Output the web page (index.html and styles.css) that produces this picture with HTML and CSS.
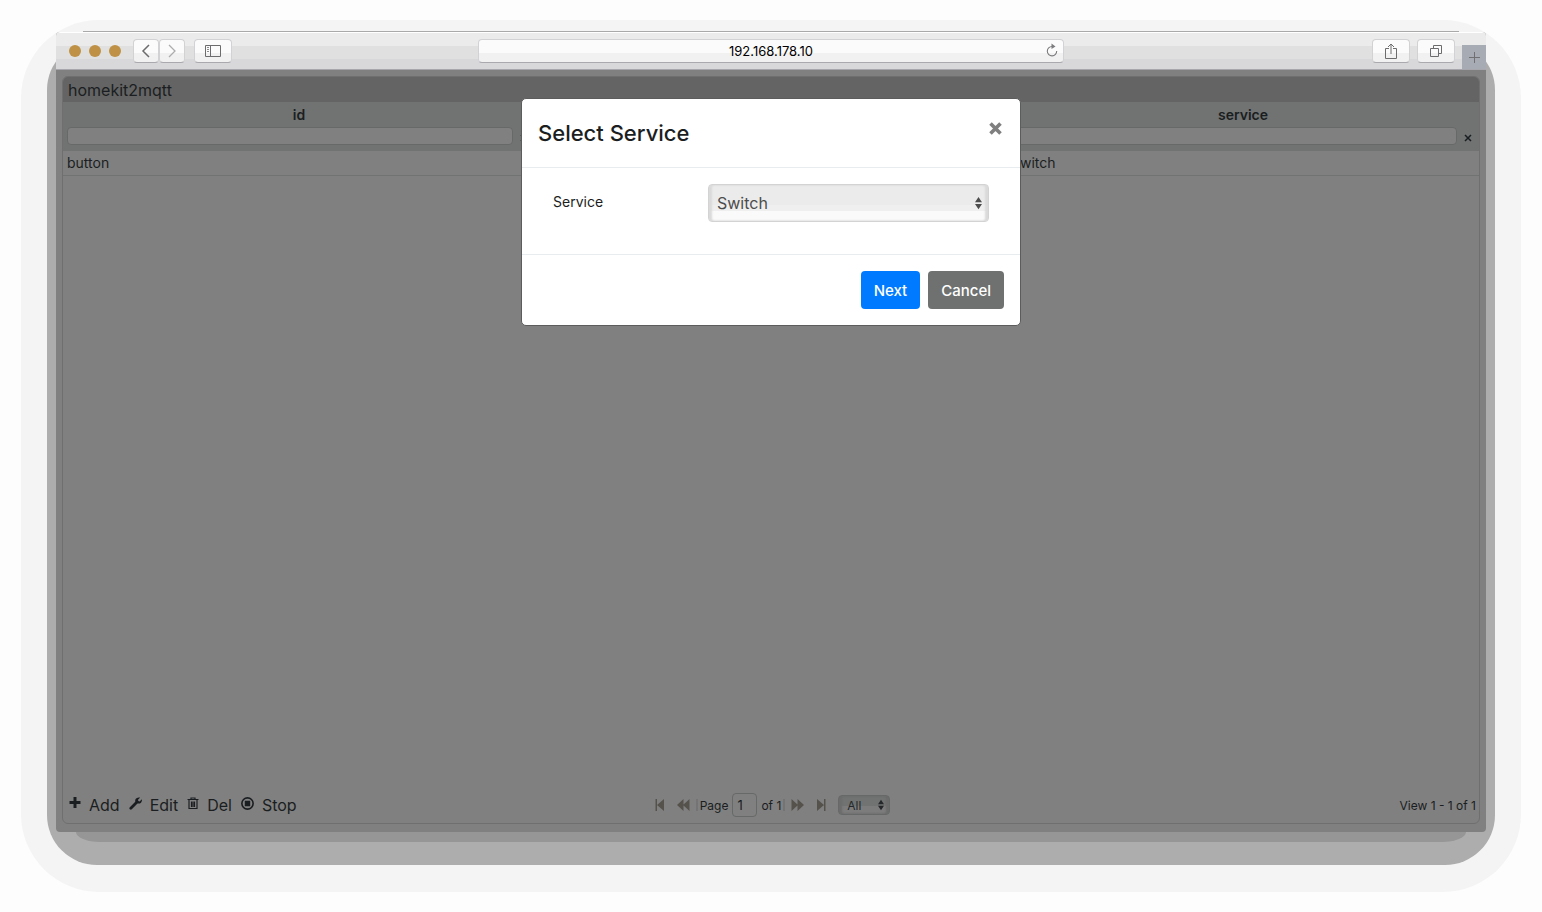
FILE: index.html
```html
<!DOCTYPE html>
<html lang="en">
<head>
    <meta charset="UTF-8">
    <meta name="viewport" content="width=device-width, initial-scale=1.0">
    <title>homekit2mqtt</title>
    <link rel="stylesheet" href="styles.css">
</head>
<body>
    <div class="glow">
        <div class="top-line"></div>
        <div class="shadow">
            <div class="window">
                <div class="toolbar">
                    <div class="toolbar-left">
                        <span class="dot"></span>
                        <span class="dot"></span>
                        <span class="dot"></span>
                        <div class="nav-buttons">
                            <button class="tool nav" aria-label="Back">
                                <svg width="10" height="14" viewBox="0 0 10 14"><path d="M8 1L2 7l6 6" fill="none" stroke="#6c6c6e" stroke-width="1.5"/></svg>
                            </button>
                            <button class="tool nav" aria-label="Forward">
                                <svg width="10" height="14" viewBox="0 0 10 14"><path d="M2 1l6 6-6 6" fill="none" stroke="#acacae" stroke-width="1.3"/></svg>
                            </button>
                        </div>
                        <button class="tool" aria-label="Sidebar">
                            <svg width="16" height="12" viewBox="0 0 16 12"><path d="M.5.5h15v11H.5zM5.5.5v11" fill="none" stroke="#6c6c6e"/><path d="M2 2.5h2M2 4.5h2M2 6.5h2" stroke="#8c8c8e"/></svg>
                        </button>
                    </div>
                    <div class="address">
                        <input type="text" class="address-input" aria-label="Address" value="192.168.178.10">
                        <button class="reload" aria-label="Reload">
                            <svg width="12" height="14" viewBox="0 0 12 14"><path d="M6 3.5A4.7 4.7 0 1 0 10.7 8" fill="none" stroke="#7c7c7e" stroke-width="1.1"/><path d="M5.5.5l4 3-4 2.5z" fill="#7c7c7e"/></svg>
                        </button>
                    </div>
                    <div class="toolbar-right">
                        <button class="tool" aria-label="Share">
                            <svg width="12" height="16" viewBox="0 0 12 16"><path d="M4 5.5H.5v10h11v-10H8M6 11V1.5M3 4l3-3 3 3" fill="none" stroke="#6c6c6e"/></svg>
                        </button>
                        <button class="tool" aria-label="Show tabs">
                            <svg width="12" height="12" viewBox="0 0 12 12"><path d="M.5 3.5h8v8h-8zM3.500 3.500v-3h8v8h-3" fill="none" stroke="#6c6c6e"/></svg>
                        </button>
                        <button class="new-tab" aria-label="New tab">
                            <svg width="11" height="11" viewBox="0 0 11 11"><path d="M5.5 0v11M0 5.5h11" stroke="#707072"/></svg>
                        </button>
                    </div>
                </div>

                <div class="page">
                    <div class="grid">
                        <div class="caption">homekit2mqtt</div>
                        <table>
                            <thead>
                                <tr class="labels">
                                    <th>id</th>
                                    <th></th>
                                    <th>service</th>
                                </tr>
                                <tr class="filters">
                                    <td><div class="filter"><input type="text" aria-label="Filter id"><button aria-label="Clear id"><svg width="8" height="8" viewBox="0 0 8 8"><path d="M1 1l6 6M7 1L1 7" stroke="#1b1e21" stroke-width="1.5"/></svg></button></div></td>
                                    <td></td>
                                    <td><div class="filter"><input type="text" aria-label="Filter service"><button aria-label="Clear service"><svg width="8" height="8" viewBox="0 0 8 8"><path d="M1 1l6 6M7 1L1 7" stroke="#1b1e21" stroke-width="1.5"/></svg></button></div></td>
                                </tr>
                            </thead>
                            <tbody>
                                <tr>
                                    <td>button</td>
                                    <td></td>
                                    <td>Switch</td>
                                </tr>
                            </tbody>
                        </table>

                        <div class="pager">
                            <div class="actions">
                                <button><svg width="12" height="12" viewBox="0 0 12 12"><path d="M6 0v11M.5 5.5h11" stroke="#1b1e21" stroke-width="3"/></svg>Add</button>
                                <button><svg width="13" height="13" viewBox="0 0 13 13"><path d="M1.8 11.2L8 5" stroke="#1b1e21" stroke-width="2.8" stroke-linecap="round"/><path d="M11.2.6L9 2.8l.3 1.300 1.300.3 2.200-2.200c.6 2-.8 4.400-3.300 4.400C7.300 6.600 6 5 6.200 3.200 6.500 1 9 0 11.200.6z" fill="#1b1e21"/></svg>Edit</button>
                                <button><svg width="12" height="13" viewBox="0 0 12 13"><path d="M.5 2.500h11M4 2.500V1h4v1.500M2 3v8.500h8V3M4.500 4.500V10M6 4.500V10M7.500 4.500V10" fill="none" stroke="#1b1e21" stroke-width="1.200"/></svg>Del</button>
                                <button><svg width="13" height="13" viewBox="0 0 12 12"><circle cx="6" cy="6" r="5.200" fill="none" stroke="#1b1e21" stroke-width="1.500"/><path d="M3.500 3.500h5v5h-5z" fill="#1b1e21"/></svg>Stop</button>
                            </div>
                            <div class="paging">
                                <button aria-label="First page"><svg width="10" height="12" viewBox="0 0 10 12"><path d="M.5 0H2v12H.5zM9 0v12L2 6z"/></svg></button>
                                <button aria-label="Previous page"><svg width="13" height="12" viewBox="0 0 13 12"><path d="M6.500 0v12L0 6zM12.500 0v12L6 6z"/></svg></button>
                                <label class="page-label">Page <input type="text" value="1"> of 1</label>
                                <button aria-label="Next page"><svg width="13" height="12" viewBox="0 0 13 12"><path d="M.5 0v12L7 6zM6.500 0v12L13 6z"/></svg></button>
                                <button aria-label="Last page"><svg width="10" height="12" viewBox="0 0 10 12"><path d="M1 0v12l7-6zM8 0h1.500v12H8z"/></svg></button>
                                <div class="select small">
                                    <select aria-label="Rows per page"><option>All</option></select>
                                    <svg class="arrows" width="6" height="12" viewBox="0 0 8 14"><path d="M4 0l4 6H0zM4 14l4-6H0z" fill="#25282a"/></svg>
                                </div>
                            </div>
                            <div class="view">View 1 - 1 of 1</div>
                        </div>
                    </div>
                </div>
            </div>
            <div class="near-shadow"></div>
        </div>
    </div>

    <div class="modal" role="dialog" aria-labelledby="modalTitle">
        <div class="modal-header">
            <h4 id="modalTitle">Select Service</h4>
            <button class="close" aria-label="Close">
                <svg width="13" height="13" viewBox="0 0 13 13"><path d="M1.500 1.500l10 10M11.500 1.500l-10 10" stroke="#7f7f7f" stroke-width="3.600"/></svg>
            </button>
        </div>
        <div class="modal-body">
            <label for="service">Service</label>
            <div class="select">
                <select id="service"><option>Switch</option></select>
                <svg class="arrows" width="7" height="14" viewBox="0 0 8 14"><path d="M4 0l4 6H0zM4 14l4-6H0z" fill="#4d4d4d"/></svg>
            </div>
        </div>
        <div class="modal-footer">
            <button class="btn primary">Next</button>
            <button class="btn">Cancel</button>
        </div>
    </div>
</body>
</html>
```
FILE: styles.css
```css
* {
    box-sizing: border-box;
}
body {
    margin: 0;
    min-height: 100vh;
    padding: 20px 21px;
    display: flex;
    flex-direction: column;
    background: #fdfdfd;
    color: #1b1e21;
    font-family: Inter, "Liberation Sans", sans-serif;
    font-size: 14px;
}
button, input, select {
    font-family: inherit;
    color: inherit;
    margin: 0;
}
button {
    display: flex;
    align-items: center;
    justify-content: center;
    padding: 0;
    border: none;
    background: none;
}
.glow {
    flex: 1;
    display: flex;
    flex-direction: column;
    padding: 11px 26px 27px;
    background: #f4f4f4;
    border-radius: 78px;
}
.top-line {
    height: 1px;
    margin: 0 36px 8px;
    background: #a9a9a9;
}
.shadow {
    flex: 1;
    display: flex;
    flex-direction: column;
    padding: 0 9px 23px;
    background: #adadad;
    border-radius: 50px;
}
.window {
    flex: 1;
    display: flex;
    flex-direction: column;
    margin-top: -8px;
    background: #808080;
    border-radius: 4px;
    overflow: hidden;
}
.near-shadow {
    height: 10px;
    margin: 0 20px;
    background: #969696;
    border-radius: 0 0 24px 24px / 0 0 10px 10px;
}

/* browser toolbar */
.toolbar {
    display: grid;
    grid-template-columns: 1fr 41% 1fr;
    height: 38px;
    border-top: 1px solid #fff;
    border-bottom: 1px solid #a6a6ac;
    background: linear-gradient(#ebebeb 13px, #e0e0e0 13px, #e0e0e0 26px, #d8d7da 26px);
}
.toolbar-left {
    display: flex;
    align-items: center;
    gap: 8px;
    padding-left: 13px;
}
.dot {
    width: 12px;
    height: 12px;
    border-radius: 50%;
    background: #be9146;
}
.nav-buttons {
    display: flex;
    padding: 0 1px 0 4px;
}
.tool {
    width: 38px;
    height: 24px;
    border: 1px solid #d2d2d4;
    border-bottom-color: #a9a9ae;
    border-radius: 4px;
    background: linear-gradient(#fbfbfb 60%, #f1f1f1 60%);
}
.nav {
    width: 26px;
}
.address {
    position: relative;
    align-self: center;
}
.address-input {
    display: block;
    width: 100%;
    height: 24px;
    padding: 0 24px;
    border: 1px solid #d2d2d4;
    border-bottom-color: #a9a9ae;
    border-radius: 4px;
    background: linear-gradient(#fbfbfb 60%, #f1f1f1 60%);
    color: #000;
    font-size: 13px;
    text-align: center;
}
.reload {
    position: absolute;
    top: 4px;
    right: 6px;
}
.toolbar-right {
    display: flex;
    align-items: center;
    justify-content: flex-end;
    gap: 7px;
}
.new-tab {
    align-self: flex-end;
    width: 24px;
    height: 24px;
    background: #a7abb4;
}

/* data grid */
.page {
    flex: 1;
    display: flex;
    padding: 6px 6px 8px;
}
.grid {
    flex: 1;
    display: flex;
    flex-direction: column;
    border: 1px solid #6f6f6f;
    border-radius: 6px;
    overflow: hidden;
}
.caption {
    height: 25px;
    padding-left: 5px;
    background: #646464;
    font-size: 16px;
    line-height: 26px;
}
table {
    width: 100%;
    table-layout: fixed;
    border-collapse: collapse;
}
thead {
    background: #707372;
}
th, td {
    padding: 0 4px;
    text-align: left;
}
.labels th {
    height: 24px;
    text-align: center;
    font-weight: 600;
}
.filters td {
    height: 25px;
    vertical-align: top;
}
.filter {
    display: flex;
    align-items: center;
    gap: 7px;
    padding-top: 1px;
}
.filter input {
    flex: 1;
    min-width: 0;
    height: 18px;
    border: 1px solid #666968;
    border-radius: 4px;
    background: #808080;
}
.filter button {
    width: 8px;
    height: 18px;
    margin-right: 3px;
    padding-top: 4px;
}
tbody td {
    height: 24px;
    border-bottom: 1px solid #717373;
}

/* pager */
.pager {
    display: grid;
    grid-template-columns: 1fr auto 1fr;
    align-items: center;
    height: 36px;
    margin-top: auto;
    padding: 0 3px 0 6px;
    font-size: 12px;
}
.actions {
    display: flex;
    gap: 9px;
}
.actions button {
    gap: 8px;
    font-size: 16px;
}
.actions svg {
    margin-bottom: 4px;
}
.paging {
    display: flex;
    align-items: center;
    gap: 12px;
    fill: #55524c;
}
.page-label {
    display: flex;
    align-items: center;
    gap: 4px;
    padding: 0 4px;
    margin: 0 -6px;
    background: linear-gradient(#747474, #747474) left / 2px 12px no-repeat, linear-gradient(#747474, #747474) right / 2px 12px no-repeat;
}
.page-label input {
    width: 25px;
    height: 24px;
    padding: 0 4px;
    border: 1px solid #666968;
    border-radius: 4px;
    background: #808080;
    font-size: 13px;
}
.view {
    text-align: right;
}

/* selects */
.select {
    position: relative;
}
.select select {
    display: block;
    width: 100%;
    height: 38px;
    padding: 0 8px;
    appearance: none;
    border: 1px solid #d3d3d3;
    border-radius: 4px;
    background: linear-gradient(#ebebeb 20px, #efefef 20px, #efefef 26px, #fafafa 26px);
    box-shadow: inset 3px 0 2px #dadada, inset -3px 0 2px #dadada;
    color: #4d4d4d;
    font-size: 16px;
}
.arrows {
    position: absolute;
    top: 12px;
    right: 7px;
}
.small {
    width: 52px;
}
.small select {
    height: 20px;
    border-color: #666968;
    background: linear-gradient(#707372 10px, #7c7c7c 10px);
    box-shadow: inset 3px 0 2px #6c6c6c, inset -3px 0 2px #6c6c6c;
    color: #25282a;
    font-size: 12px;
}
.small .arrows {
    top: 4px;
    right: 6px;
}

/* modal */
.modal {
    position: absolute;
    top: 98px;
    left: 50%;
    width: 500px;
    transform: translateX(-50%);
    border: 1px solid #5c5c5c;
    border-radius: 5px;
    background: #fff;
}
.modal-header {
    display: flex;
    justify-content: space-between;
    align-items: flex-start;
    padding: 16px 18px 16px 16px;
    border-bottom: 1px solid #e9ecef;
}
.modal-header h4 {
    margin: 0;
    font-size: 22px;
    font-weight: 500;
    line-height: 36px;
}
.close {
    margin-top: 7px;
}
.modal-body {
    display: grid;
    grid-template-columns: 1fr 281px;
    align-items: center;
    padding: 16px 31px 32px;
    border-bottom: 1px solid #e9ecef;
}
.modal-body label {
    padding-bottom: 3px;
}
.modal-footer {
    display: flex;
    justify-content: flex-end;
    gap: 8px;
    padding: 16px;
}
.btn {
    height: 38px;
    padding: 0 13px;
    border-radius: 4px;
    background: #6e7170;
    color: #fff;
    font-size: 15px;
    font-weight: 500;
}
.primary {
    background: #007bff;
}
```
